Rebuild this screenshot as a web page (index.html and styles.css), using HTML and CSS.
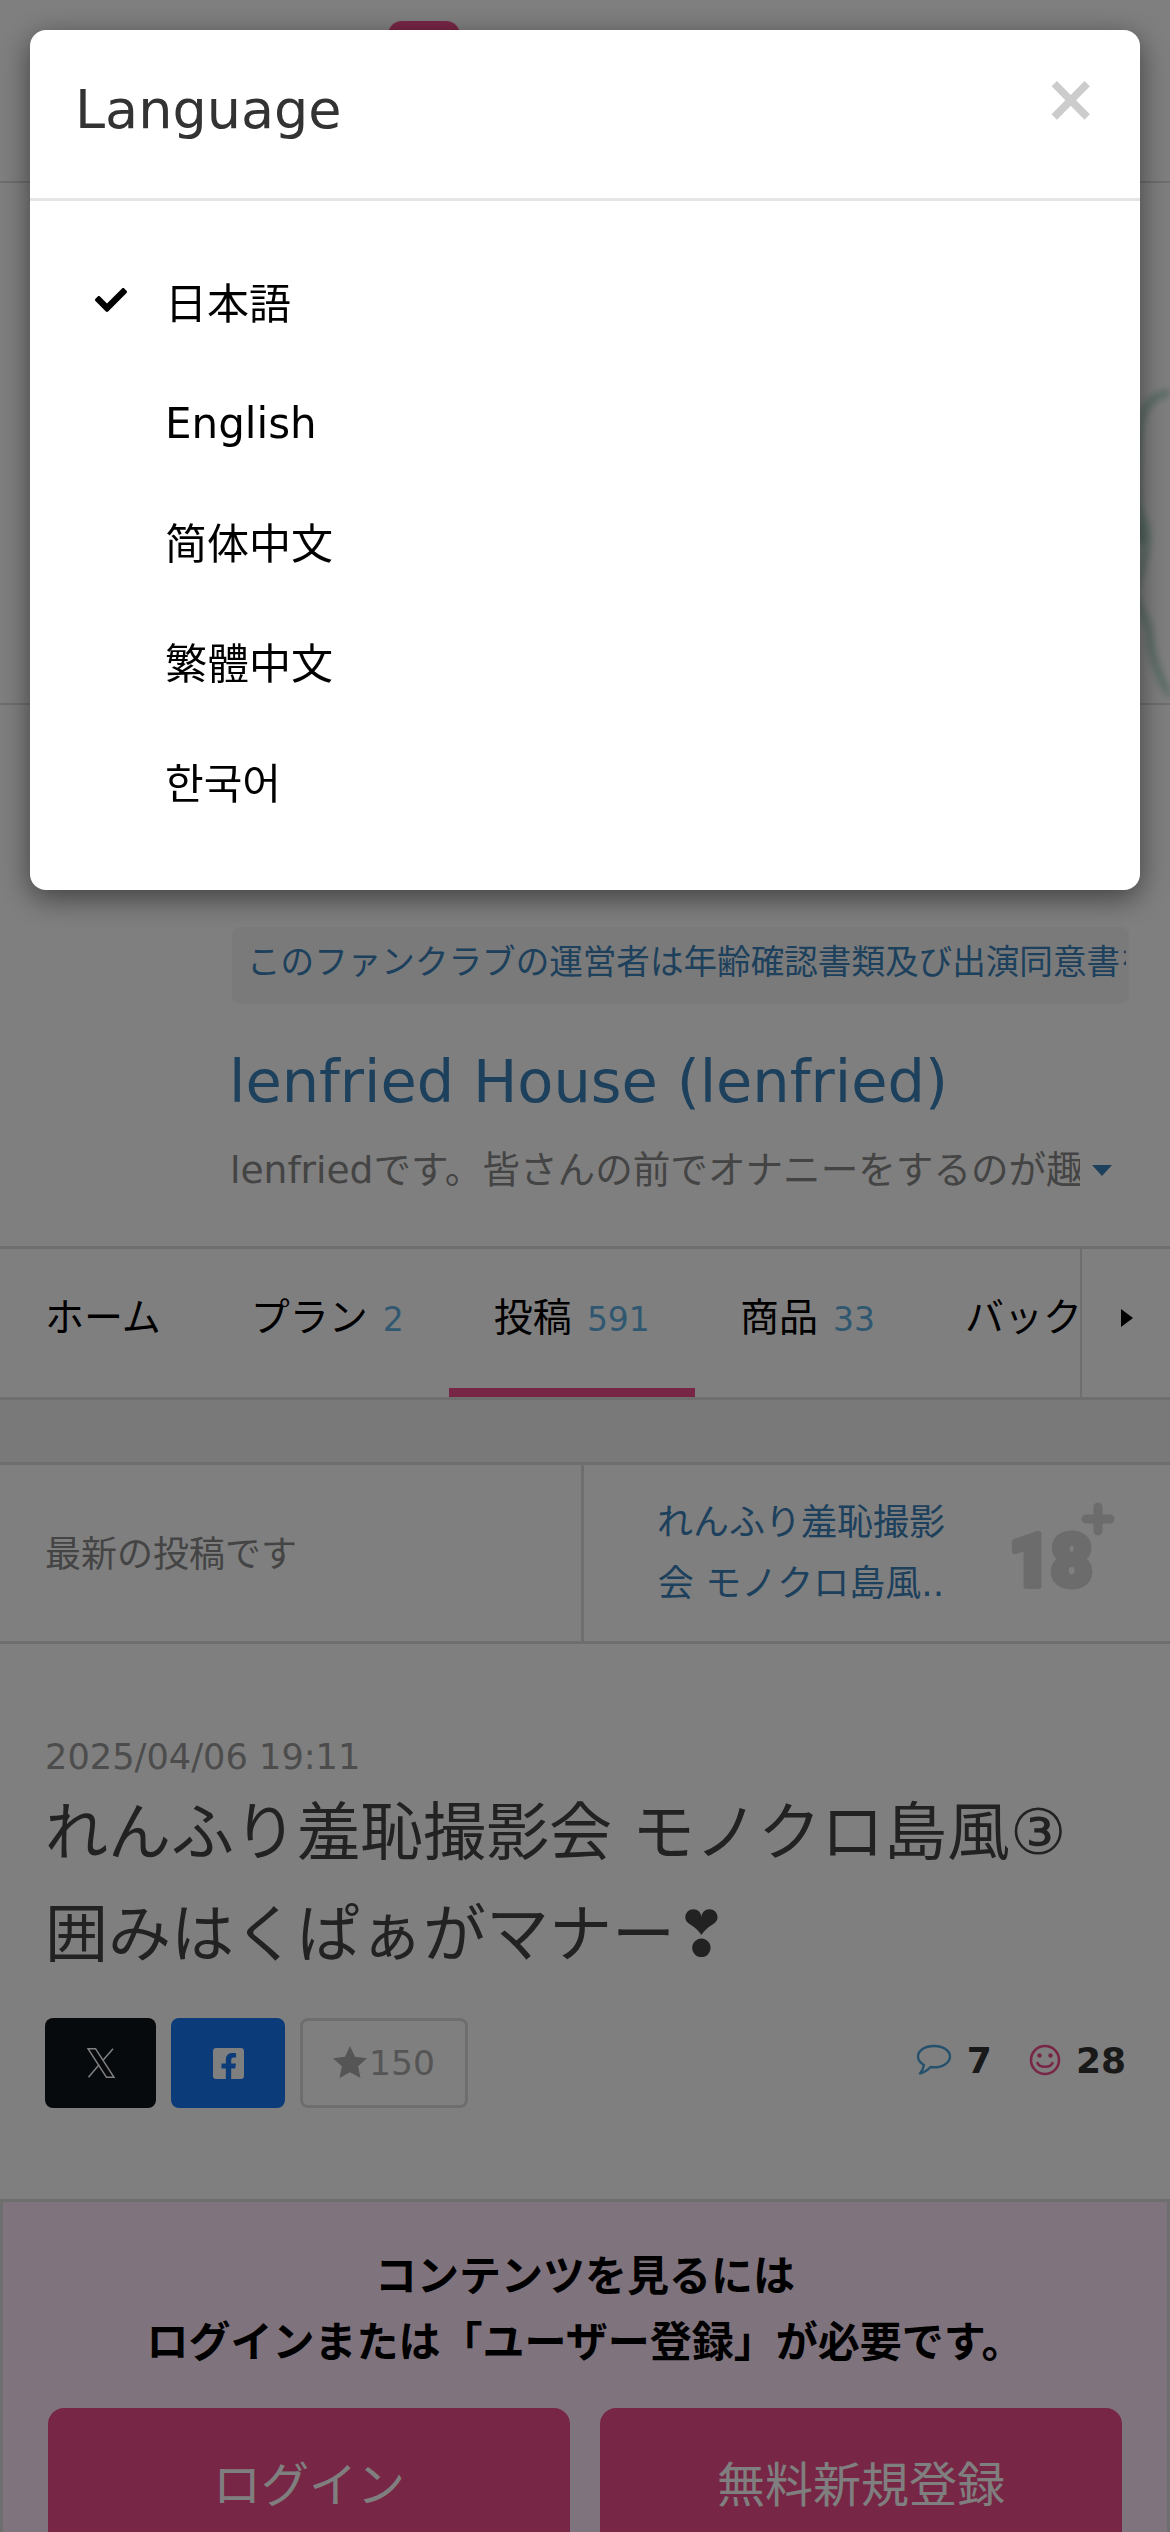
FILE: index.html
```html
<!DOCTYPE html>
<html lang="ja">
<head>
<meta charset="utf-8">
<title>Language</title>
<link rel="stylesheet" href="styles.css">
</head>
<body>
<div class="page">
  <header class="site-header"><span class="header-btn"></span></header>
  <section class="hero">
    <svg class="hero-art" viewBox="0 0 40 330" fill="none" stroke-linecap="round">
      <path d="M40 20C18 22 6 40 8 80C9 110 4 130 14 150C22 165 10 200 4 220C10 240 22 250 20 270C24 290 32 310 40 322" stroke="#bcdcd0" stroke-width="8"/>
      <path d="M6 60C0 100 0 130 10 165" stroke="#a8ccc0" stroke-width="12"/>
    </svg>
  </section>
  <section class="profile">
    <div class="notice"><span class="notice-text">このファンクラブの運営者は年齢確認書類及び出演同意書を</span></div>
    <h1 class="club-name">lenfried House (lenfried)</h1>
    <div class="club-desc"><span class="club-desc-text">lenfriedです。皆さんの前でオナニーをするのが趣味です</span><span class="caret"></span></div>
  </section>
  <nav class="tabs">
    <div class="tab-list">
      <a class="tab">ホーム</a>
      <a class="tab">プラン<span class="count">2</span></a>
      <a class="tab tab-active">投稿<span class="count">591</span></a>
      <a class="tab">商品<span class="count">33</span></a>
      <a class="tab">バックナンバー</a>
    </div>
    <div class="tab-next"><span class="arrow"></span></div>
  </nav>
  <div class="band"></div>
  <section class="pager">
    <div class="pager-prev">最新の投稿です</div>
    <div class="pager-next">
      <a class="pager-link">れんふり羞恥撮影<br>会 モノクロ島風..</a>
      <svg class="age-icon" viewBox="0 0 108 88">
        <text class="age-num" x="2" y="84">18</text>
        <path class="age-plus" d="M91 5V29M79 17H103"/>
      </svg>
    </div>
  </section>
  <article class="post">
    <div class="post-date">2025/04/06 19:11</div>
    <h2 class="post-title">れんふり羞恥撮影会 モノクロ島風③<br>囲みはくぱぁがマナー❣</h2>
    <div class="post-actions">
      <a class="share share-x">
        <svg class="x-icon" viewBox="0 0 28 30"><path d="M1 .7H8.500L27 29.300H19.500zM26 .7L15.800 12.500M12.300 16.500L1.500 29.300"/></svg>
      </a>
      <a class="share share-fb">
        <svg class="fb-icon" viewBox="0 32 448 448"><path d="M400 32H48A48 48 0 0 0 0 80v352a48 48 0 0 0 48 48h137.25V327.69h-63V256h63v-54.64c0-62.15 37-96.48 93.67-96.48 27.14 0 55.52 4.84 55.52 4.84v61h-31.27c-30.81 0-40.42 19.12-40.42 38.73V256h68.78l-11 71.69h-57.78V480H400a48 48 0 0 0 48-48V80a48 48 0 0 0-48-48z"/></svg>
      </a>
      <a class="fav">
        <svg class="star-icon" viewBox="0 0 34 32"><path d="M17 0l5 10.8 12 1.4-8.9 8 2.4 11.8L17 26.2 6.500 32l2.400-11.800L0 12.200l12-1.400z"/></svg>150
      </a>
      <div class="stats">
        <svg class="bubble-icon" viewBox="0 0 36 32"><path d="M18 2C9 2 2 6.500 2 12.500c0 3.500 2.500 6.500 6 8.500-.5 3-2 6-4 8.500 4-1 8-3.500 10.500-6.500 1 .2 2.300.3 3.500.3 9 0 16-4.800 16-10.800S27 2 18 2z"/></svg>
        <b class="stat-num">7</b>
        <svg class="smile-icon" viewBox="0 0 32 32"><circle cx="16" cy="16" r="14"/><circle class="eye" cx="10.500" cy="11.500" r="2.200"/><circle class="eye" cx="21.500" cy="11.500" r="2.200"/><path d="M8.500 19c2 5 13 5 15 0"/></svg>
        <b class="stat-num">28</b>
      </div>
    </div>
  </article>
  <section class="locked">
    <p class="locked-text">コンテンツを見るには<br>ログインまたは「ユーザー登録」が必要です。</p>
    <div class="locked-btns">
      <a class="cta">ログイン</a>
      <a class="cta">無料新規登録</a>
    </div>
  </section>
</div>
<div class="backdrop"></div>
<div class="modal">
  <div class="modal-head">
    <h3 class="modal-title">Language</h3>
    <span class="modal-close">×</span>
  </div>
  <ul class="lang-list">
    <li class="lang lang-cjk"><span class="lang-check"><svg class="check-icon" viewBox="0 0 512 512"><path d="M173.898 439.404l-166.400-166.400c-9.997-9.997-9.997-26.206 0-36.204l36.203-36.204c9.997-9.998 26.206-9.998 36.204 0L192 312.690 432.095 72.596c9.997-9.997 26.206-9.997 36.204 0l36.203 36.204c9.997 9.997 9.997 26.206 0 36.204l-294.400 294.401c-9.998 9.997-26.207 9.997-36.204-.001z"/></svg></span>日本語</li>
    <li class="lang"><span class="lang-check"></span>English</li>
    <li class="lang lang-cjk"><span class="lang-check"></span>简体中文</li>
    <li class="lang lang-cjk"><span class="lang-check"></span>繁體中文</li>
    <li class="lang lang-cjk"><span class="lang-check"></span>한국어</li>
  </ul>
</div>
</body>
</html>
```

FILE: styles.css
```css
* { box-sizing: border-box; }
html, body { margin: 0; height: 2532px; overflow: hidden; background: #fff; }
body { font-family: "DejaVu Sans", "Noto Sans CJK JP", sans-serif; color: #333; }
a { display: block; }

.page { width: 1170px; height: 2532px; overflow: hidden; background: #fff; }

.site-header { height: 183px; border-bottom: 2px solid #ddd; padding: 21px 0 0 388px; }
.header-btn { display: block; width: 72px; height: 60px; background: #f04c8c; border-radius: 14px; }

.hero { height: 522px; border-bottom: 2px solid #ddd; display: flex; justify-content: flex-end; padding-top: 190px; overflow: hidden; }
.hero-art { width: 40px; height: 330px; filter: blur(3px); }

.profile { height: 541px; padding: 222px 0 0 232px; }
.notice { width: 897px; height: 77px; background: #f5f5f5; border-radius: 8px; padding: 0 3px 0 15px; overflow: hidden; line-height: 72px; font-size: 33.6px; color: #3a80b8; white-space: nowrap; }
.notice-text { display: block; overflow: hidden; }
.club-name { margin: 36px 0 0 -3px; font-size: 59px; font-weight: 400; line-height: 84px; color: #3a80b8; white-space: nowrap; }
.club-desc { margin: 20px 0 0 -2px; display: flex; align-items: center; font-size: 37.6px; line-height: 52px; color: #888; }
.club-desc-text { width: 850px; overflow: hidden; white-space: nowrap; }
.caret { margin-left: 12px; width: 0; height: 0; border-left: 10px solid transparent; border-right: 10px solid transparent; border-top: 11px solid #3a80b8; }

.tabs { height: 154px; border-top: 3px solid #ddd; border-bottom: 3px solid #ddd; display: flex; }
.tab-list { width: 1080px; display: flex; overflow: hidden; }
.tab { flex: none; height: 148px; padding: 0 45px; font-size: 39px; line-height: 138px; color: #000; white-space: nowrap; }
.tab-active { border-bottom: 9px solid #f04c8c; }
.count { margin-left: 15px; font-size: 33px; color: #5fb0e0; }
.tab-next { flex: 1; border-left: 2px solid #ddd; display: flex; align-items: center; justify-content: center; padding-bottom: 10px; }
.arrow { width: 0; height: 0; margin-left: 2px; border-top: 9px solid transparent; border-bottom: 9px solid transparent; border-left: 12px solid #000; }

.band { height: 62px; background: #f2f2f2; }

.pager { height: 182px; border-top: 3px solid #ddd; border-bottom: 3px solid #ddd; display: flex; }
.pager-prev { width: 584px; padding: 0 0 5px 45px; border-right: 3px solid #ddd; display: flex; align-items: center; font-size: 36px; color: #888; }
.pager-next { flex: 1; display: flex; align-items: center; }
.pager-link { width: 434px; text-align: center; font-size: 36px; line-height: 61px; color: #3a80b8; }
.age-icon { width: 108px; height: 88px; margin: -14px 0 0 -11px; overflow: visible; }
.age-num { font-family: "Roboto", sans-serif; font-weight: 900; font-size: 72px; fill: #d8d8d8; stroke: #d8d8d8; stroke-width: 6px; stroke-linejoin: round; }
.age-plus { fill: none; stroke: #d8d8d8; stroke-width: 9px; stroke-linecap: round; }

.post { height: 555px; padding: 88px 46px 0 45px; }
.post-date { font-size: 35.2px; line-height: 50px; color: #999; }
.post-title { margin: 0; font-size: 63px; font-weight: 400; line-height: 102px; color: #444; white-space: nowrap; }
.post-actions { margin-top: 32px; display: flex; align-items: flex-start; }
.share { height: 90px; border-radius: 8px; display: flex; align-items: center; justify-content: center; }
.share-x { width: 111px; background: #0f1419; }
.x-icon { width: 28px; height: 30px; fill: none; stroke: #fff; stroke-width: 1.500px; }
.share-fb { width: 114px; margin-left: 15px; background: #1877f2; }
.fb-icon { width: 31px; height: 31px; fill: #fff; }
.fav { width: 168px; height: 90px; margin-left: 15px; border: 3px solid #ddd; border-radius: 8px; display: flex; align-items: center; justify-content: center; font-size: 34.5px; color: #aaa; }
.star-icon { width: 34px; height: 32px; fill: #aaa; margin: -2px 2px 0 0; }
.stats { margin: 0 -2px 0 auto; height: 84px; display: flex; align-items: center; font-weight: 700; }
.bubble-icon { width: 36px; height: 32px; fill: none; stroke: #4aa3d8; stroke-width: 2.400px; stroke-linejoin: round; }
.stat-num { font-size: 36px; color: #333; }
.bubble-icon + .stat-num { margin: 0 37px 0 15px; }
.smile-icon { width: 32px; height: 32px; fill: none; stroke: #f04c8c; stroke-width: 2.600px; stroke-linecap: round; margin-right: 15px; }
.smile-icon .eye { fill: #f04c8c; stroke: none; }

.locked { height: 333px; margin: 0; background: #ffe6fa; border-top: 3px solid #ddd; border-left: 3px solid #ddd; border-right: 3px solid #ddd; padding: 42px 45px 0; }
.locked-text { margin: 0; text-align: center; font-size: 42px; line-height: 66px; font-weight: 700; color: #000; }
.locked-btns { margin-top: 32px; display: flex; gap: 30px; }
.cta { flex: 1; height: 180px; background: #f04c8c; border-radius: 16px 16px 0 0; padding-top: 44px; text-align: center; font-size: 48px; line-height: 66px; color: #fff; }

.backdrop { position: fixed; inset: 0; background: rgba(0, 0, 0, .5); }
.modal { position: fixed; left: 30px; right: 30px; top: 30px; height: 860px; background: #fff; border-radius: 16px; box-shadow: 0 8px 30px rgba(0, 0, 0, .5); overflow: hidden; }
.modal-head { height: 171px; border-bottom: 3px solid #e5e5e5; display: flex; justify-content: space-between; padding: 43px 42px 0 45px; }
.modal-title { margin: 0; font-size: 54px; font-weight: 400; line-height: 74px; color: #333; }
.modal-close { font-size: 65px; font-weight: 700; line-height: 58px; margin-top: -3px; color: #ccc; }
.lang-list { list-style: none; margin: 0; padding: 42px 0 0 0; }
.lang { height: 120px; display: flex; align-items: center; font-size: 42px; color: #000; }
.lang-cjk { padding-bottom: 6px; }
.lang-check { width: 135px; padding-left: 65px; display: flex; }
.check-icon { width: 32px; height: 32px; fill: #000; }
```
